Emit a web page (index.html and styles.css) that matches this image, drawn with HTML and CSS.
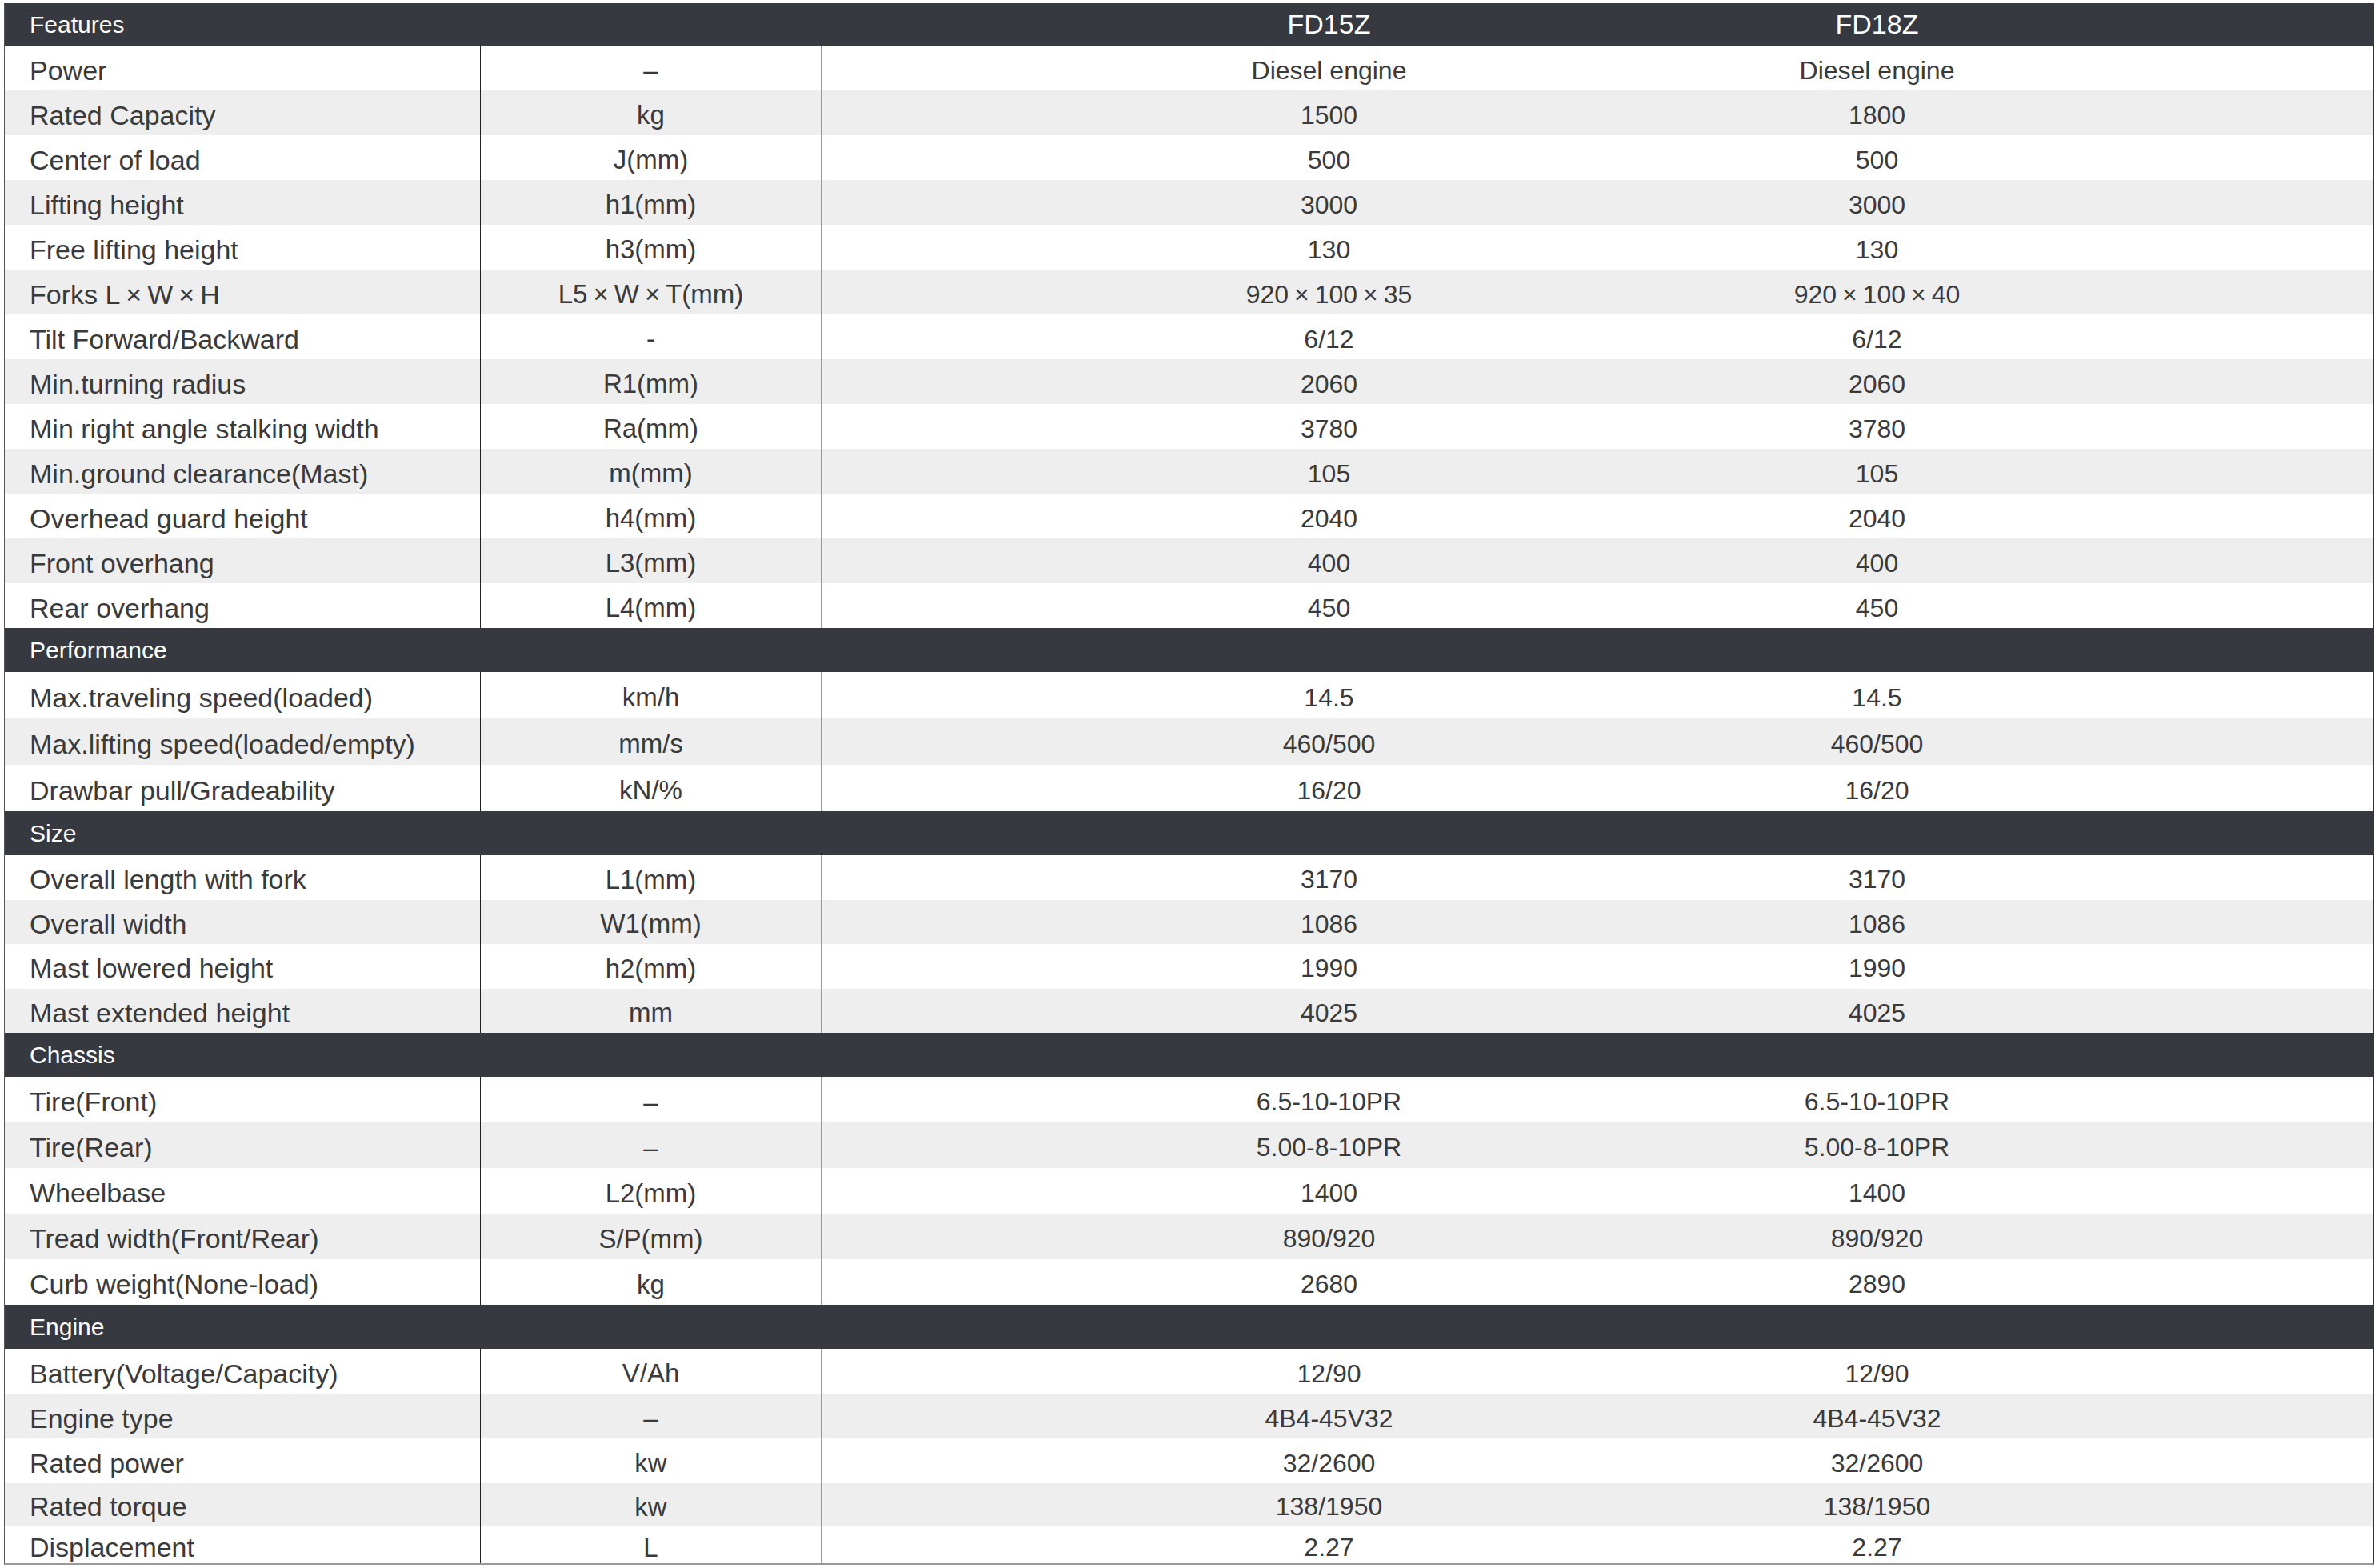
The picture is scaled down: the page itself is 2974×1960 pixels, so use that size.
FILE: index.html
```html
<!DOCTYPE html>
<html lang="en">
<head>
<meta charset="utf-8">
<title>Forklift specifications</title>
<link rel="stylesheet" href="styles.css">
</head>
<body>
<div class="spec">
  <div class="row head top"><div class="lbl">Features</div><div class="unit"></div><div class="vals"><span class="v">FD15Z</span><span class="v">FD18Z</span></div></div>

  <div class="row"><div class="lbl">Power</div><div class="unit">–</div><div class="vals"><span class="v">Diesel engine</span><span class="v">Diesel engine</span></div></div>
  <div class="row alt"><div class="lbl">Rated Capacity</div><div class="unit">kg</div><div class="vals"><span class="v">1500</span><span class="v">1800</span></div></div>
  <div class="row"><div class="lbl">Center of load</div><div class="unit">J(mm)</div><div class="vals"><span class="v">500</span><span class="v">500</span></div></div>
  <div class="row alt"><div class="lbl">Lifting height</div><div class="unit">h1(mm)</div><div class="vals"><span class="v">3000</span><span class="v">3000</span></div></div>
  <div class="row"><div class="lbl">Free lifting height</div><div class="unit">h3(mm)</div><div class="vals"><span class="v">130</span><span class="v">130</span></div></div>
  <div class="row alt"><div class="lbl">Forks L<span class="x">×</span>W<span class="x">×</span>H</div><div class="unit">L5<span class="x">×</span>W<span class="x">×</span>T(mm)</div><div class="vals"><span class="v">920<span class="x">×</span>100<span class="x">×</span>35</span><span class="v">920<span class="x">×</span>100<span class="x">×</span>40</span></div></div>
  <div class="row"><div class="lbl">Tilt Forward/Backward</div><div class="unit">-</div><div class="vals"><span class="v">6/12</span><span class="v">6/12</span></div></div>
  <div class="row alt"><div class="lbl">Min.turning radius</div><div class="unit">R1(mm)</div><div class="vals"><span class="v">2060</span><span class="v">2060</span></div></div>
  <div class="row"><div class="lbl">Min right angle stalking width</div><div class="unit">Ra(mm)</div><div class="vals"><span class="v">3780</span><span class="v">3780</span></div></div>
  <div class="row alt"><div class="lbl">Min.ground clearance(Mast)</div><div class="unit">m(mm)</div><div class="vals"><span class="v">105</span><span class="v">105</span></div></div>
  <div class="row"><div class="lbl">Overhead guard height</div><div class="unit">h4(mm)</div><div class="vals"><span class="v">2040</span><span class="v">2040</span></div></div>
  <div class="row alt"><div class="lbl">Front overhang</div><div class="unit">L3(mm)</div><div class="vals"><span class="v">400</span><span class="v">400</span></div></div>
  <div class="row"><div class="lbl">Rear overhang</div><div class="unit">L4(mm)</div><div class="vals"><span class="v">450</span><span class="v">450</span></div></div>

  <div class="row head"><div class="lbl">Performance</div></div>
  <div class="row perf"><div class="lbl">Max.traveling speed(loaded)</div><div class="unit">km/h</div><div class="vals"><span class="v">14.5</span><span class="v">14.5</span></div></div>
  <div class="row perf alt"><div class="lbl">Max.lifting speed(loaded/empty)</div><div class="unit">mm/s</div><div class="vals"><span class="v">460/500</span><span class="v">460/500</span></div></div>
  <div class="row perf"><div class="lbl">Drawbar pull/Gradeability</div><div class="unit">kN/%</div><div class="vals"><span class="v">16/20</span><span class="v">16/20</span></div></div>

  <div class="row head"><div class="lbl">Size</div></div>
  <div class="row size"><div class="lbl">Overall length with fork</div><div class="unit">L1(mm)</div><div class="vals"><span class="v">3170</span><span class="v">3170</span></div></div>
  <div class="row size alt"><div class="lbl">Overall width</div><div class="unit">W1(mm)</div><div class="vals"><span class="v">1086</span><span class="v">1086</span></div></div>
  <div class="row size"><div class="lbl">Mast lowered height</div><div class="unit">h2(mm)</div><div class="vals"><span class="v">1990</span><span class="v">1990</span></div></div>
  <div class="row size alt"><div class="lbl">Mast extended height</div><div class="unit">mm</div><div class="vals"><span class="v">4025</span><span class="v">4025</span></div></div>

  <div class="row head"><div class="lbl">Chassis</div></div>
  <div class="row chas"><div class="lbl">Tire(Front)</div><div class="unit">–</div><div class="vals"><span class="v">6.5-10-10PR</span><span class="v">6.5-10-10PR</span></div></div>
  <div class="row chas alt"><div class="lbl">Tire(Rear)</div><div class="unit">–</div><div class="vals"><span class="v">5.00-8-10PR</span><span class="v">5.00-8-10PR</span></div></div>
  <div class="row chas"><div class="lbl">Wheelbase</div><div class="unit">L2(mm)</div><div class="vals"><span class="v">1400</span><span class="v">1400</span></div></div>
  <div class="row chas alt"><div class="lbl">Tread width(Front/Rear)</div><div class="unit">S/P(mm)</div><div class="vals"><span class="v">890/920</span><span class="v">890/920</span></div></div>
  <div class="row chas"><div class="lbl">Curb weight(None-load)</div><div class="unit">kg</div><div class="vals"><span class="v">2680</span><span class="v">2890</span></div></div>

  <div class="row head"><div class="lbl">Engine</div></div>
  <div class="row eng"><div class="lbl">Battery(Voltage/Capacity)</div><div class="unit">V/Ah</div><div class="vals"><span class="v">12/90</span><span class="v">12/90</span></div></div>
  <div class="row eng alt"><div class="lbl">Engine type</div><div class="unit">–</div><div class="vals"><span class="v">4B4-45V32</span><span class="v">4B4-45V32</span></div></div>
  <div class="row eng"><div class="lbl">Rated power</div><div class="unit">kw</div><div class="vals"><span class="v">32/2600</span><span class="v">32/2600</span></div></div>
  <div class="row eng alt short"><div class="lbl">Rated torque</div><div class="unit">kw</div><div class="vals"><span class="v">138/1950</span><span class="v">138/1950</span></div></div>
  <div class="row eng last"><div class="lbl">Displacement</div><div class="unit">L</div><div class="vals"><span class="v">2.27</span><span class="v">2.27</span></div></div>
</div>
</body>
</html>
```

FILE: styles.css
```css
html, body {
  margin: 0;
  padding: 0;
  background: #ffffff;
}

.spec {
  width: 2963px;
  margin: 4px 0 0 5px;
  border-left: 1px solid #555;
  border-right: 1px solid #333;
  border-bottom: 2px solid #999;
  font-family: "Liberation Sans", Arial, sans-serif;
  font-size: 32px;
  color: #3a3a3a;
  box-sizing: border-box;
}

.row {
  display: flex;
  height: 56px;
  background: #fff;
}

.row.alt {
  background: #eeeeee;
}

.row.perf { height: 58px; }
.row.size { height: 55.5px; }
.row.chas { height: 57px; }
.row.eng  { height: 56px; }
.row.eng.short { height: 53px; }
.row.eng.last { height: 47px; }

.x {
  margin: 0 7px;
}

.lbl {
  width: 595px;
  flex: none;
  box-sizing: border-box;
  padding: 6px 0 0 31px;
  border-right: 1px solid #222;
  display: flex;
  align-items: center;
  white-space: nowrap;
  font-size: 34px;
}

.unit {
  width: 426px;
  flex: none;
  box-sizing: border-box;
  padding-top: 6px;
  border-right: 1px solid #999;
  display: flex;
  align-items: center;
  justify-content: center;
  white-space: nowrap;
  font-size: 33px;
}

.vals {
  flex: 1;
  display: flex;
  padding: 6px 0 0 292px;
  box-sizing: border-box;
}

.v {
  width: 685px;
  display: flex;
  align-items: center;
  justify-content: center;
  white-space: nowrap;
}

.row.eng.last .lbl,
.row.eng.last .unit,
.row.eng.last .vals {
  padding-top: 8px;
}

.row.head {
  height: 55px;
  background: #363940;
  color: #fff;
}

.row.head.top {
  height: 53px;
}

.row.head .lbl {
  width: 100%;
  border-right: none;
  padding-top: 0;
  font-size: 30px;
}

.row.head.top .lbl {
  width: 595px;
}

.row.head .unit {
  border-right: none;
  padding-top: 0;
}

.row.head .vals {
  padding-top: 0;
  font-size: 34px;
}
```
